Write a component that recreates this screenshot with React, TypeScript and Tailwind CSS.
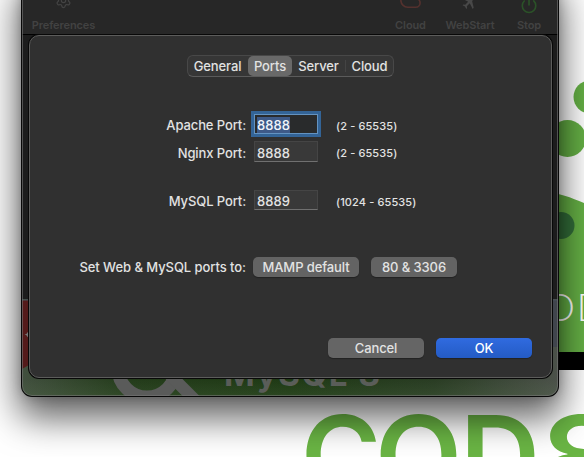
import React from "react";
import { Cloud, Power, Settings } from "lucide-react";
import { MdFlight } from "react-icons/md";

function Desktop() {
  return (
    <svg className="absolute inset-0" width="584" height="457" viewBox="0 0 584 457" fill="none">
      <rect width="584" height="457" fill="#fff" />
      <circle cx="590" cy="97" r="16.500" fill="#65b045" />
      <circle cx="567.500" cy="138.500" r="18.500" fill="#65b045" />
      <path d="M540 192C560 192 571 198 584 203V352H540Z" fill="#65b045" />
      <circle cx="561" cy="225.500" r="13.500" fill="#336f3a" />
      <text x="545.500" y="321" fontFamily="Lato, sans-serif" fontWeight="300" fontSize="37" letterSpacing="2" fill="#fff">OD</text>
      <rect x="540" y="352" width="44" height="18" fill="#000" />
      <g fill="#6ab544" fontFamily="Inter, sans-serif" fontWeight="600" fontSize="110">
        <text x="301" y="495" textLength="80" lengthAdjust="spacingAndGlyphs">C</text>
        <text x="375" y="495" textLength="87" lengthAdjust="spacingAndGlyphs">O</text>
        <text x="460" y="495" textLength="80" lengthAdjust="spacingAndGlyphs">D</text>
        <text x="540" y="495" textLength="84" lengthAdjust="spacingAndGlyphs">Ɛ</text>
      </g>
    </svg>
  );
}

function ToolItem({ label, className, children }: { label: string; className: string; children: React.ReactNode }) {
  return (
    <div className={`flex shrink-0 flex-col items-center ${className}`}>
      <div className="flex h-[18px] items-end">{children}</div>
      <span className="mt-[7px] whitespace-nowrap text-[11px] leading-[14px] font-semibold tracking-[-0.1px] text-[#424242]">{label}</span>
    </div>
  );
}

function Artwork() {
  return (
    <svg className="block" width="536" height="97" viewBox="22 299 536 97">
      <defs>
        <linearGradient id="grass" x1="22" x2="558" y1="0" y2="0" gradientUnits="userSpaceOnUse">
          <stop offset="0" stopColor="#414f3e" />
          <stop offset=".2" stopColor="#233b1a" />
          <stop offset=".5" stopColor="#1e3914" />
          <stop offset=".77" stopColor="#293c23" />
          <stop offset="1" stopColor="#4b5149" />
        </linearGradient>
        <linearGradient id="shine" x1="0" x2="0" y1="379" y2="396" gradientUnits="userSpaceOnUse">
          <stop offset="0" stopColor="#6c8b62" stopOpacity="0" />
          <stop offset="1" stopColor="#6c8b62" stopOpacity=".16" />
        </linearGradient>
      </defs>
      <rect x="22" y="299" width="536" height="97" fill="url(#grass)" />
      <rect x="22" y="379" width="536" height="17" fill="url(#shine)" />
      <path d="M22 300H34V362L22 369Z" fill="#541a1a" />
      <path d="m27.500 332 1 2 1 .5-1 .7-1 2-1-2-2-.7 2-.5Z" fill="#777" />
      <rect x="548" y="300" width="10" height="47" fill="#40454c" />
      <rect x="22" y="299.500" width="536" height="1" fill="#46505b" />
      <circle cx="147" cy="368" r="29" fill="none" stroke="#5a5b5a" strokeWidth="13" />
      <path d="m168 373 28 28" stroke="#5a5b5a" strokeWidth="12" />
      <text x="224" y="386" fontFamily="Inter, sans-serif" fontSize="33" fontWeight="700" fill="#5a5d59" textLength="156" lengthAdjust="spacing">MySQL 8</text>
    </svg>
  );
}

function PortRow({ label, value, hint, className, active }: { label: string; value: string; hint: string; className: string; active?: boolean }) {
  return (
    <div className={`flex items-center ${className}`}>
      <span className="w-[216px] whitespace-nowrap pt-[2px] text-right">{label}</span>
      <div className={active
        ? "ml-[8px] flex h-5 w-16 items-center border border-[#6393c1] bg-[#292b2c] pt-[2px] pl-[2px] ring-3 ring-[#336497]"
        : "ml-[8px] flex h-full w-16 items-center border border-[#454545] border-b-[#707070] bg-[#393939] pt-[2px] pl-[2px]"}>
        <span className={active ? "bg-[#3e5a88] text-[13px] leading-[16px] tracking-[0.08px] text-[#f0f4fa]" : "text-[13px] leading-[16px] tracking-[0.08px]"}>{value}</span>
      </div>
      <span className="ml-[18px] whitespace-nowrap pt-[3px] text-[11px] tracking-[0.12px]">{hint}</span>
    </div>
  );
}

function Button({ children, className }: { children: React.ReactNode; className: string }) {
  return <button className={`flex h-5 items-center justify-center whitespace-nowrap rounded-[5px] pb-px shadow-[0_1px_1px_rgba(0,0,0,.3)] ${className}`}>{children}</button>;
}

function PreferencesSheet() {
  return (
    <section className="absolute top-[35px] left-[29px] flex h-[343px] w-[523px] flex-col rounded-[10px] border border-[#5c5c5b] bg-[#303030] text-[13px] leading-4 font-medium tracking-[-0.1px] text-[#e2e2e2] shadow-[0_0_0_1px_#080808]">
      <nav className="mt-[19px] ml-[157px] flex h-[22px] w-[207px] items-center rounded-[6px] border border-[#484848] border-b-[#5b5b5b] bg-[#363636]">
        <span className="w-[60px] pb-px pr-px text-center">General</span>
        <span className="flex h-5 w-[44px] items-center justify-center rounded-[5px] bg-[#696969] pb-px">Ports</span>
        <span className="w-[53px] pb-px text-center">Server</span>
        <span className="h-3 w-px bg-[#444]" />
        <span className="w-[47px] pb-px text-center">Cloud</span>
      </nav>
      <PortRow label="Apache Port:" value="8888" hint="(2 - 65535)" className="mt-[37px] h-5" active />
      <PortRow label="Nginx Port:" value="8888" hint="(2 - 65535)" className="mt-[7px] h-[21px]" />
      <PortRow label="MySQL Port:" value="8889" hint="(1024 - 65535)" className="mt-[28px] h-5" />
      <div className="mt-[47px] flex items-center">
        <span className="w-[216px] whitespace-nowrap pb-px text-right tracking-[-0.06px]">Set Web &amp; MySQL ports to:</span>
        <Button className="ml-[7px] w-[106px] bg-[#636363]">MAMP default</Button>
        <Button className="ml-3 w-[86px] bg-[#636363]">80 &amp; 3306</Button>
      </div>
      <footer className="mt-[61px] flex gap-3 pl-[298px]">
        <Button className="w-24 bg-[#656565]">Cancel</Button>
        <Button className="w-24 bg-linear-to-b from-[#306be0] to-[#245bc4] text-white">OK</Button>
      </footer>
    </section>
  );
}

export default function App() {
  return (
    <main className="relative h-[457px] w-[584px] overflow-hidden font-['Inter',sans-serif]">
      <Desktop />
      <section className="absolute -top-6 left-[22px] flex h-[420px] w-[536px] flex-col overflow-hidden rounded-[10px] bg-[#1c1c1c] shadow-[0_0_0_1px_#080808,0_0_12px_rgba(0,0,0,.26),0_18px_36px_4px_rgba(0,0,0,.62)]">
        <header className="flex h-[59px] shrink-0 items-start border-b border-black bg-[#272727] pt-[17px]">
          <ToolItem label="Preferences" className="w-[83px]"><Settings size={17} strokeWidth={1.7} className="mb-[2px] text-[#444]" /></ToolItem>
          <ToolItem label="Cloud" className="ml-[275px] w-[61px]"><Cloud size={23} strokeWidth={1.7} className="-mb-px text-[#54312e]" /></ToolItem>
          <ToolItem label="WebStart" className="w-[58px]"><MdFlight size={18} className="rotate-45 text-[#484848]" /></ToolItem>
          <ToolItem label="Stop" className="w-[60px]"><Power size={18} strokeWidth={2.2} className="-mb-[3px] text-[#2b5228]" /></ToolItem>
        </header>
        <div className="h-[264px] shrink-0" />
        <Artwork />
        <div className="pointer-events-none absolute inset-0 rounded-[10px] border border-[#777]/60" />
      </section>
      <PreferencesSheet />
    </main>
  );
}
